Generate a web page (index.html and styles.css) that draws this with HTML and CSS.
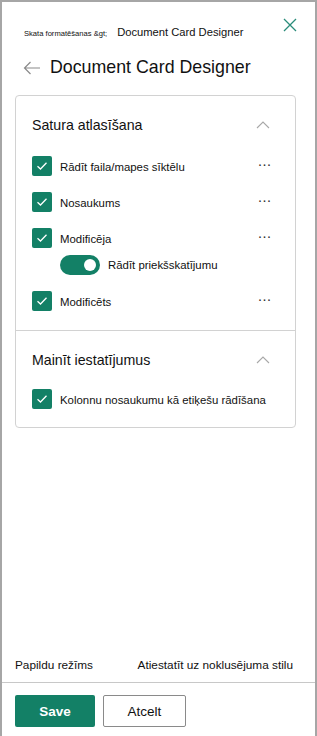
FILE: index.html
```html
<!DOCTYPE html>
<html lang="lv">
<head>
    <meta charset="UTF-8">
    <meta name="viewport" content="width=device-width, initial-scale=1.0">
    <title>Document Card Designer</title>
    <link rel="stylesheet" href="styles.css">
</head>
<body>
    <div id="panel">
        <div id="top-row">
            <div id="breadcrumb">
                <span class="crumb-small">Skata formatēšanas &amp;gt;</span>
                <span class="crumb-current">Document Card Designer</span>
            </div>
            <button id="close" aria-label="Aizvērt">
                <svg width="14" height="14" viewBox="0 0 14 14"><path d="M1 1L13 13M13 1L1 13" stroke="#2a8c7a" stroke-width="1.3" fill="none"/></svg>
            </button>
        </div>
        <div id="title-row">
            <svg class="back" width="18" height="14" viewBox="0 0 18 14"><path d="M17 7H1.5M7.5 1L1.5 7L7.5 13" stroke="#8a8a8a" stroke-width="1.2" fill="none"/></svg>
            <h1>Document Card Designer</h1>
        </div>

        <div id="card">
            <div class="section first">
                <div class="section-head">
                    <h2>Satura atlasīšana</h2>
                    <svg class="chevron" width="14" height="8" viewBox="0 0 14 8"><path d="M1 7L7 1L13 7" stroke="#a8a8a8" stroke-width="1.1" fill="none"/></svg>
                </div>
                <div class="item">
                    <span class="check"><svg width="12" height="10" viewBox="0 0 12 10"><path d="M1.5 5.2L4.5 8L10.5 1.8" stroke="#fff" stroke-width="1.3" fill="none"/></svg></span>
                    <span class="label">Rādīt faila/mapes sīktēlu</span>
                    <span class="more">···</span>
                </div>
                <div class="item">
                    <span class="check"><svg width="12" height="10" viewBox="0 0 12 10"><path d="M1.5 5.2L4.5 8L10.5 1.8" stroke="#fff" stroke-width="1.3" fill="none"/></svg></span>
                    <span class="label">Nosaukums</span>
                    <span class="more">···</span>
                </div>
                <div class="item">
                    <span class="check"><svg width="12" height="10" viewBox="0 0 12 10"><path d="M1.5 5.2L4.5 8L10.5 1.8" stroke="#fff" stroke-width="1.3" fill="none"/></svg></span>
                    <span class="label">Modificēja</span>
                    <span class="more">···</span>
                </div>
                <div class="sub-item">
                    <span class="toggle"><span class="knob"></span></span>
                    <span class="label">Rādīt priekšskatījumu</span>
                </div>
                <div class="item">
                    <span class="check"><svg width="12" height="10" viewBox="0 0 12 10"><path d="M1.5 5.2L4.5 8L10.5 1.8" stroke="#fff" stroke-width="1.3" fill="none"/></svg></span>
                    <span class="label">Modificēts</span>
                    <span class="more">···</span>
                </div>
            </div>
            <div class="section second">
                <div class="section-head">
                    <h2>Mainīt iestatījumus</h2>
                    <svg class="chevron" width="14" height="8" viewBox="0 0 14 8"><path d="M1 7L7 1L13 7" stroke="#a8a8a8" stroke-width="1.1" fill="none"/></svg>
                </div>
                <div class="item">
                    <span class="check"><svg width="12" height="10" viewBox="0 0 12 10"><path d="M1.5 5.2L4.5 8L10.5 1.8" stroke="#fff" stroke-width="1.3" fill="none"/></svg></span>
                    <span class="label">Kolonnu nosaukumu kā etiķešu rādīšana</span>
                </div>
            </div>
        </div>

        <div id="links">
            <a href="#">Papildu režīms</a>
            <a href="#">Atiestatīt uz noklusējuma stilu</a>
        </div>
        <div id="footer">
            <button id="save">Save</button>
            <button id="cancel">Atcelt</button>
        </div>
    </div>
</body>
</html>
```

FILE: styles.css
```css
html, body {
    margin: 0;
    height: 100%;
    background-color: #ffffff;
}
body {
    font-family: "Liberation Sans", Arial, sans-serif;
    color: #1b1b1b;
}
#panel {
    box-sizing: border-box;
    height: 100vh;
    border: 2px solid #a6a6a6;
    border-bottom: none;
    display: flex;
    flex-direction: column;
}
#top-row {
    display: flex;
    justify-content: space-between;
    align-items: flex-start;
    padding: 16px 18px 0 22px;
}
#breadcrumb {
    display: flex;
    align-items: baseline;
    gap: 10px;
    padding-top: 8px;
}
.crumb-small {
    font-size: 7.6px;
    color: #111;
}
.crumb-current {
    font-size: 11.2px;
    color: #111;
}
#close {
    background: none;
    border: none;
    padding: 0;
    cursor: pointer;
    display: flex;
}
#title-row {
    display: flex;
    align-items: center;
    gap: 9px;
    padding: 19px 0 0 21px;
}
h1 {
    margin: 0;
    font-size: 17.8px;
    font-weight: normal;
    color: #111;
}
#card {
    margin: 17px 19px 0 13px;
    border: 1px solid #d2d2d2;
    border-radius: 4px;
}
.section {
    padding: 0 16px 3px 16px;
}
.section.second {
    border-top: 1px solid #d2d2d2;
    padding-bottom: 18px;
}
.section-head {
    display: flex;
    justify-content: space-between;
    align-items: center;
    height: 58px;
}
.first .section-head {
    margin-bottom: 2px;
}
h2 {
    margin: 0;
    font-size: 14.2px;
    font-weight: normal;
    color: #111;
}
.chevron {
    margin-right: 9px;
}
.item {
    display: flex;
    align-items: flex-start;
    min-height: 36px;
}
.check {
    box-sizing: border-box;
    width: 20px;
    height: 20px;
    border-radius: 2px;
    background-color: #138066;
    display: flex;
    align-items: center;
    justify-content: center;
    flex-shrink: 0;
}
.label {
    font-size: 11.4px;
    line-height: 14px;
    color: #111;
    padding: 4px 0 0 8px;
    flex: 1;
}
.more {
    font-size: 15px;
    line-height: 10px;
    color: #333;
    letter-spacing: -0.5px;
    margin: 3px 8px 0 0;
}
.sub-item {
    display: flex;
    align-items: center;
    margin: -9px 0 16px 28px;
    height: 20px;
}
.sub-item .label {
    padding: 0 0 0 8px;
}
.toggle {
    width: 40px;
    height: 20px;
    border-radius: 10px;
    background-color: #138066;
    display: flex;
    align-items: center;
    justify-content: flex-end;
}
.knob {
    width: 12px;
    height: 12px;
    border-radius: 50%;
    background-color: #fff;
    margin-right: 4px;
}
.second .item {
    min-height: 20px;
}
#links {
    margin-top: auto;
    display: flex;
    justify-content: space-between;
    padding: 0 22px 0 13px;
    height: 24px;
    align-items: flex-start;
}
#links a {
    color: #111;
    text-decoration: none;
    font-size: 11.8px;
}
#footer {
    border-top: 1px solid #c8c8c8;
    display: flex;
    gap: 8px;
    padding: 12px 13px 9px 13px;
}
button#save, button#cancel {
    height: 32px;
    font-family: "Liberation Sans", Arial, sans-serif;
    font-size: 13.5px;
    border-radius: 2px;
    cursor: pointer;
}
#save {
    width: 80px;
    background-color: #138066;
    color: #fff;
    border: none;
    font-weight: bold;
}
#cancel {
    width: 83px;
    background-color: #fff;
    color: #111;
    border: 1px solid #8a8a8a;
}
```
